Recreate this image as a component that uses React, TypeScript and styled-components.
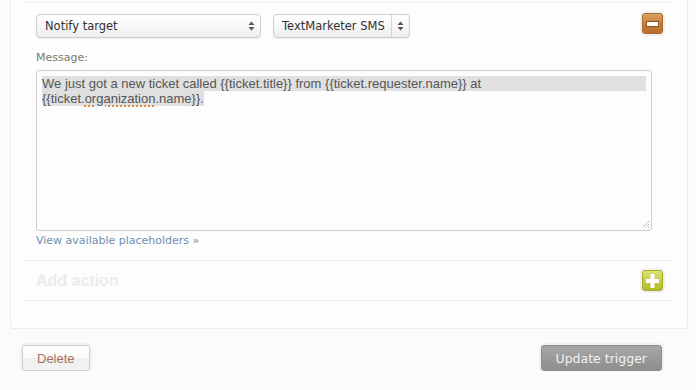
import React from "react"
import styled, { createGlobalStyle } from "styled-components"

const GlobalStyle = createGlobalStyle`
  html, body {
    margin: 0;
    padding: 0;
    background: #fbfbfb;
    font-family: "DejaVu Sans", sans-serif;
  }
`

const Page = styled.div`
  padding: 0 8px 0 10px;
`

const Panel = styled.div`
  background: #fdfdfd;
  border: 1px solid #ececec;
  border-top: none;
  border-radius: 0 0 4px 4px;
  padding: 2px 15px 27px 13px;
`

const ActionBlock = styled.div`
  border-top: 1px solid #efefef;
  border-bottom: 1px solid #efefef;
  padding: 11px 9px 12px 12px;
`

const TopRow = styled.div`
  display: flex;
  justify-content: space-between;
  align-items: flex-start;
`

const SelectGroup = styled.div`
  display: flex;
  gap: 12px;
`

const SelectBox = styled.div<{ $width: number }>`
  display: flex;
  align-items: stretch;
  box-sizing: border-box;
  width: ${(p) => p.$width}px;
  height: 24px;
  border: 1px solid #cdcdcd;
  border-radius: 4px;
  background: linear-gradient(#ffffff, #f7f7f7 55%, #ededed);
  box-shadow: 0 1px 1px rgba(0, 0, 0, 0.06);
  color: #333;
  font-size: 11.5px;
`

const SelectText = styled.span`
  flex: 1;
  display: flex;
  align-items: center;
  padding-left: 8px;
  white-space: nowrap;
  overflow: hidden;
`

const ArrowBox = styled.span<{ $divider: boolean }>`
  width: 17px;
  display: flex;
  align-items: center;
  justify-content: center;
  border-left: 1px solid ${(p) => (p.$divider ? "#d6d6d6" : "transparent")};
`

const IconButton = styled.div<{ $tone: "minus" | "plus" }>`
  width: 21px;
  height: 21px;
  box-sizing: border-box;
  border-radius: 3px;
  border: 1px solid ${(p) => (p.$tone === "minus" ? "#a8692b" : "#a6ad25")};
  background: ${(p) =>
    p.$tone === "minus"
      ? "linear-gradient(#d9a264, #c27b36 60%, #b8712d)"
      : "linear-gradient(#dbe279, #c1c93a 60%, #b4bc2c)"};
  box-shadow: 0 0 0 2px #efefef;
  display: flex;
  align-items: center;
  justify-content: center;
`

const MinusWrap = styled.div`
  margin-top: -1px;
`

const Label = styled.div`
  margin-top: 13px;
  font-size: 11px;
  line-height: 13px;
  color: #7a7a72;
`

const TextArea = styled.div`
  position: relative;
  margin-top: 6px;
  box-sizing: border-box;
  width: 616px;
  height: 161px;
  border: 1px solid #cbcbcb;
  border-radius: 3px;
  background: #fdfdfd;
  padding: 5px 5px 0 5px;
  font-family: "Liberation Sans", Arial, sans-serif;
  font-size: 13px;
  line-height: 15px;
  color: #555;
`

const SelectedLine = styled.div`
  background: #e0e0e0;
  white-space: nowrap;
`

const SelectedSpan = styled.span`
  background: #e0e0e0;
`

const Misspelled = styled.span`
  text-decoration: underline dotted #d98a3c;
  text-decoration-thickness: 2px;
  text-underline-offset: 2px;
`

const Grip = styled.svg`
  position: absolute;
  right: 1px;
  bottom: 1px;
`

const Link = styled.a`
  display: block;
  margin-top: 3px;
  font-size: 11px;
  line-height: 14px;
  color: #6f8fb3;
  text-decoration: none;
`

const AddRow = styled.div`
  height: 39px;
  border-bottom: 1px solid #efefef;
  padding: 0 9px 0 12px;
  display: flex;
  align-items: center;
  justify-content: space-between;
`

const AddTitle = styled.div`
  font-family: "Liberation Sans", Arial, sans-serif;
  font-weight: bold;
  font-size: 16px;
  color: #ececec;
`

const Footer = styled.div`
  display: flex;
  justify-content: space-between;
  padding: 16px 26px 0 12px;
`

const Button = styled.button<{ $primary?: boolean }>`
  box-sizing: border-box;
  height: 26px;
  padding: 0 14px;
  border-radius: 3px;
  border: 1px solid ${(p) => (p.$primary ? "#8a8a8a" : "#cfcfcf")};
  background: ${(p) =>
    p.$primary
      ? "linear-gradient(#a8a8a8, #9a9a9a 50%, #8e8e8e)"
      : "linear-gradient(#ffffff, #fbfbfb 50%, #f0f0f0 51%, #f2f2f2)"};
  box-shadow: 0 0 0 2px #f1f1f1;
  color: ${(p) => (p.$primary ? "#f2f2f2" : "#a87064")};
  font-family: ${(p) =>
    p.$primary ? `"DejaVu Sans", sans-serif` : `"Liberation Sans", Arial, sans-serif`};
  font-size: ${(p) => (p.$primary ? "12.5px" : "13px")};
  cursor: pointer;
`

const Arrows = () => (
  <svg width="7" height="10" viewBox="0 0 7 10">
    <path d="M3.5 0.5 L6.5 4 L0.5 4 Z" fill="#555" />
    <path d="M3.5 9.5 L6.5 6 L0.5 6 Z" fill="#555" />
  </svg>
)

function Select({ label, width, divider }: { label: string; width: number; divider: boolean }) {
  return (
    <SelectBox $width={width}>
      <SelectText>{label}</SelectText>
      <ArrowBox $divider={divider}>
        <Arrows />
      </ArrowBox>
    </SelectBox>
  )
}

export default function App() {
  return (
    <Page>
      <GlobalStyle />
      <Panel>
        <ActionBlock>
          <TopRow>
            <SelectGroup>
              <Select label="Notify target" width={225} divider={false} />
              <Select label="TextMarketer SMS" width={137} divider={true} />
            </SelectGroup>
            <MinusWrap>
              <IconButton $tone="minus">
                <svg width="13" height="6" viewBox="0 0 13 6">
                  <rect x="0.5" y="0.5" width="12" height="5" fill="#fff" stroke="#8d5520" />
                </svg>
              </IconButton>
            </MinusWrap>
          </TopRow>
          <Label>Message:</Label>
          <TextArea>
            <SelectedLine>
              We just got a new ticket called {"{{ticket.title}}"} from {"{{ticket.requester.name}}"} at
            </SelectedLine>
            <SelectedSpan>
              {"{{ticket."}
              <Misspelled>organization</Misspelled>
              {".name}}."}
            </SelectedSpan>
            <Grip width="10" height="10" viewBox="0 0 10 10">
              <path d="M9 2 L2 9 M9 5 L5 9 M9 8 L8 9" stroke="#888" strokeWidth="1" strokeDasharray="1 1" />
            </Grip>
          </TextArea>
          <Link href="#">View available placeholders »</Link>
        </ActionBlock>
        <AddRow>
          <AddTitle>Add action</AddTitle>
          <IconButton $tone="plus">
            <svg width="13" height="14" viewBox="0 0 13 14">
              <rect x="4.5" y="0" width="4" height="14" fill="#fff" />
              <rect x="0" y="5" width="13" height="4" fill="#fff" />
            </svg>
          </IconButton>
        </AddRow>
      </Panel>
      <Footer>
        <Button>Delete</Button>
        <Button $primary>Update trigger</Button>
      </Footer>
    </Page>
  )
}
